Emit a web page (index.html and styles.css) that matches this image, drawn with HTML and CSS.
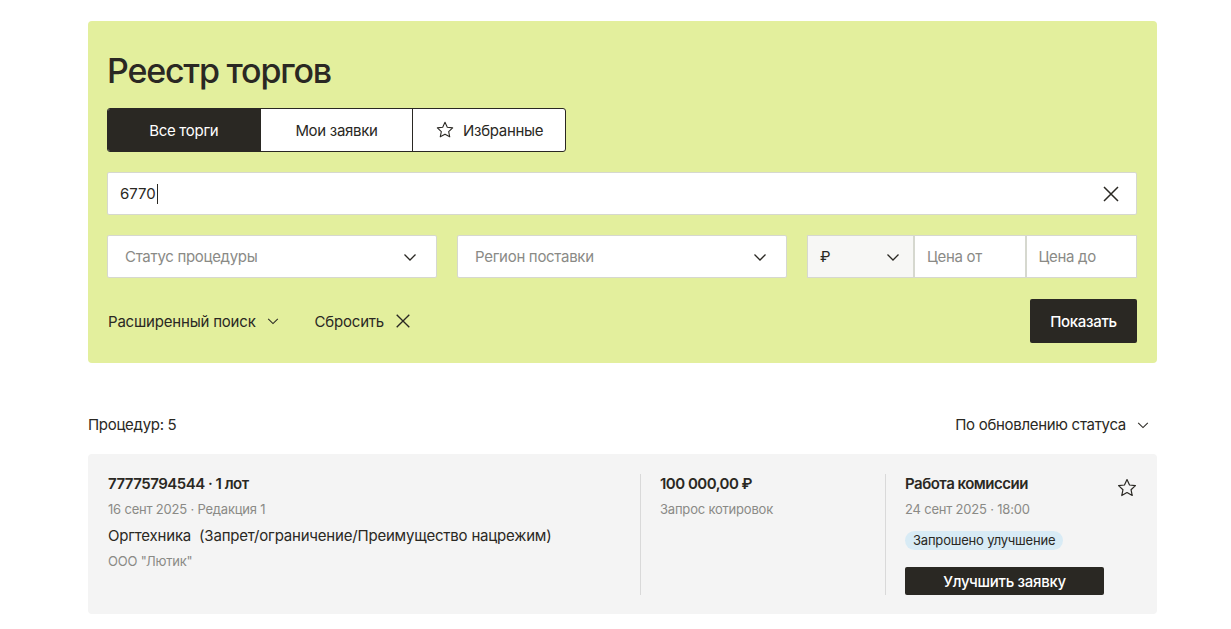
FILE: index.html
```html
<!DOCTYPE html>
<html lang="ru">
<head>
    <meta charset="UTF-8">
    <title>Реестр торгов</title>
    <link rel="stylesheet" href="styles.css">
</head>
<body>
    <div class="page">
        <section class="filters">
            <h1>Реестр торгов</h1>

            <div class="tabs">
                <a class="tab active" href="#">Все торги</a>
                <a class="tab" href="#">Мои заявки</a>
                <a class="tab" href="#">
                    <svg width="20" height="20" viewBox="0 0 24 24" fill="none" stroke="#2a2823" stroke-width="1.3" stroke-linejoin="round"><path d="M12 2.8l2.75 5.9 6.45.75-4.8 4.4 1.3 6.35L12 17l-5.7 3.2 1.3-6.35-4.8-4.4 6.45-.75z"/></svg>
                    Избранные
                </a>
            </div>

            <div class="search">
                <span class="search-value">6770</span>
                <svg width="20" height="20" viewBox="0 0 20 20" stroke="#2a2823" stroke-width="1.5"><path d="M3 3l14 14M17 3L3 17"/></svg>
            </div>

            <div class="selects">
                <div class="select">
                    <span>Статус процедуры</span>
                    <svg class="chevron" width="16" height="16" viewBox="0 0 16 16" fill="none" stroke="#2a2823" stroke-width="1.3"><path d="M2.5 5.5L8 11l5.5-5.5"/></svg>
                </div>
                <div class="select">
                    <span>Регион поставки</span>
                    <svg class="chevron" width="16" height="16" viewBox="0 0 16 16" fill="none" stroke="#2a2823" stroke-width="1.3"><path d="M2.5 5.5L8 11l5.5-5.5"/></svg>
                </div>
                <div class="price">
                    <div class="currency">
                        <span>₽</span>
                        <svg class="chevron" width="16" height="16" viewBox="0 0 16 16" fill="none" stroke="#2a2823" stroke-width="1.3"><path d="M2.5 5.5L8 11l5.5-5.5"/></svg>
                    </div>
                    <div class="price-input">Цена от</div>
                    <div class="price-input">Цена до</div>
                </div>
            </div>

            <div class="actions">
                <div class="links">
                    <a href="#">Расширенный поиск
                        <svg width="14" height="14" viewBox="0 0 16 16" fill="none" stroke="#2a2823" stroke-width="1.2"><path d="M2.5 5.5L8 11l5.5-5.5"/></svg>
                    </a>
                    <a href="#">Сбросить
                        <svg width="18" height="18" viewBox="0 0 20 20" stroke="#2a2823" stroke-width="1.5"><path d="M3 3l14 14M17 3L3 17"/></svg>
                    </a>
                </div>
                <button class="btn-dark">Показать</button>
            </div>
        </section>

        <div class="list-head">
            <span>Процедур: 5</span>
            <span class="sort">По обновлению статуса
                <svg width="14" height="14" viewBox="0 0 16 16" fill="none" stroke="#2a2823" stroke-width="1.2"><path d="M2.5 5.5L8 11l5.5-5.5"/></svg>
            </span>
        </div>

        <div class="card">
            <div class="col-main">
                <div class="card-num">77775794544 · 1 лот</div>
                <div class="muted">16 сент 2025 · Редакция 1</div>
                <div class="card-title">Оргтехника&nbsp; (Запрет/ограничение/Преимущество нацрежим)</div>
                <div class="muted">ООО "Лютик"</div>
            </div>
            <div class="col-price">
                <div class="card-num">100 000,00 ₽</div>
                <div class="muted">Запрос котировок</div>
            </div>
            <div class="col-status">
                <div class="card-num">Работа комиссии</div>
                <div class="muted">24 сент 2025 · 18:00</div>
                <span class="chip">Запрошено улучшение</span>
                <button class="btn-dark btn-small">Улучшить заявку</button>
            </div>
            <svg class="fav" width="22" height="22" viewBox="0 0 24 24" fill="none" stroke="#2a2823" stroke-width="1.3" stroke-linejoin="round"><path d="M12 2.8l2.75 5.9 6.45.75-4.8 4.4 1.3 6.35L12 17l-5.7 3.2 1.3-6.35-4.8-4.4 6.45-.75z"/></svg>
        </div>
    </div>
</body>
</html>
```

FILE: styles.css
```css
body {
    margin: 0;
    font-family: 'Inter', 'Roboto', sans-serif;
    color: #2a2823;
    background: #fff;
    font-size: 15px;
}

.page {
    width: 1069px;
    margin-left: 88px;
    padding-top: 21px;
}

.filters {
    background: #e3ef9d;
    border-radius: 4px;
    padding: 28px 20px 20px 19px;
}

h1 {
    margin: 0 0 15px;
    font-size: 34px;
    font-weight: 500;
    letter-spacing: -1.2px;
    line-height: 44px;
}

.tabs {
    display: flex;
    width: 459px;
    box-sizing: border-box;
    border: 1px solid #2a2823;
    border-radius: 3px;
    overflow: hidden;
    background: #fff;
}

.tab {
    flex: 1;
    height: 42px;
    display: flex;
    align-items: center;
    justify-content: center;
    gap: 8px;
    color: #2a2823;
    text-decoration: none;
    letter-spacing: -0.3px;
}

.tab + .tab {
    border-left: 1px solid #2a2823;
}

.tab.active {
    background: #2a2823;
    color: #fff;
}

.search {
    margin-top: 20px;
    height: 43px;
    box-sizing: border-box;
    background: #fff;
    border: 1px solid #d6d8cf;
    border-radius: 2px;
    display: flex;
    align-items: center;
    justify-content: space-between;
    padding: 0 15px 0 12px;
}

.search-value {
    border-right: 1px solid #2a2823;
    padding-right: 1px;
    line-height: 20px;
}

.selects {
    margin-top: 20px;
    display: flex;
    gap: 20px;
}

.select {
    width: 330px;
    height: 43px;
    box-sizing: border-box;
    background: #fff;
    border: 1px solid #d6d8cf;
    border-radius: 2px;
    display: flex;
    align-items: center;
    justify-content: space-between;
    padding: 0 18px 0 17px;
    color: #8a8a86;
    letter-spacing: -0.3px;
}

.price {
    display: flex;
    flex: 1;
}

.currency {
    width: 107px;
    height: 43px;
    box-sizing: border-box;
    background: #f7f7f5;
    border: 1px solid #d6d8cf;
    display: flex;
    align-items: center;
    justify-content: space-between;
    padding: 0 12px 0 12px;
}

.price-input {
    flex: 1;
    height: 43px;
    box-sizing: border-box;
    background: #fff;
    border: 1px solid #d6d8cf;
    display: flex;
    align-items: center;
    padding-left: 12px;
    color: #8a8a86;
    letter-spacing: -0.3px;
}

.actions {
    margin-top: 21px;
    display: flex;
    justify-content: space-between;
    align-items: center;
}

.links {
    display: flex;
    gap: 35px;
    margin-left: 1px;
}

.links a {
    color: #2a2823;
    text-decoration: none;
    display: flex;
    align-items: center;
    gap: 10px;
    letter-spacing: -0.2px;
}

.btn-dark {
    background: #2a2823;
    color: #fff;
    border: none;
    border-radius: 2px;
    font-family: inherit;
    font-size: 15px;
    font-weight: 500;
    letter-spacing: -0.3px;
    height: 44px;
    width: 107px;
}

.list-head {
    margin-top: 52px;
    display: flex;
    justify-content: space-between;
    align-items: center;
    letter-spacing: -0.3px;
    padding-right: 7px;
}

.sort {
    display: flex;
    align-items: center;
    gap: 10px;
}

.card {
    margin-top: 20px;
    background: #f4f4f4;
    border-radius: 4px;
    padding: 20px 20px 19px 20px;
    display: flex;
    position: relative;
}

.col-main {
    width: 532px;
    border-right: 1px solid #d9d9d9;
}

.col-price {
    width: 225px;
    padding-left: 19px;
    border-right: 1px solid #d9d9d9;
}

.col-status {
    padding-left: 19px;
    width: 199px;
    display: flex;
    flex-direction: column;
    align-items: flex-start;
}

.card-num {
    font-weight: 600;
    letter-spacing: -0.5px;
    line-height: 20px;
}

.muted {
    color: #8a8a86;
    font-size: 13px;
    letter-spacing: -0.2px;
    margin-top: 7px;
    line-height: 16px;
}

.card-title {
    margin-top: 9px;
    margin-bottom: 7px;
    letter-spacing: -0.2px;
    line-height: 20px;
}

.chip {
    margin-top: 14px;
    background: #d8ebf5;
    border-radius: 10px;
    font-size: 13px;
    padding: 1px 8px;
    line-height: 17px;
    letter-spacing: -0.2px;
}

.btn-small {
    margin-top: 17px;
    width: 199px;
    height: 28px;
}

.fav {
    position: absolute;
    top: 23px;
    right: 19px;
}
```
